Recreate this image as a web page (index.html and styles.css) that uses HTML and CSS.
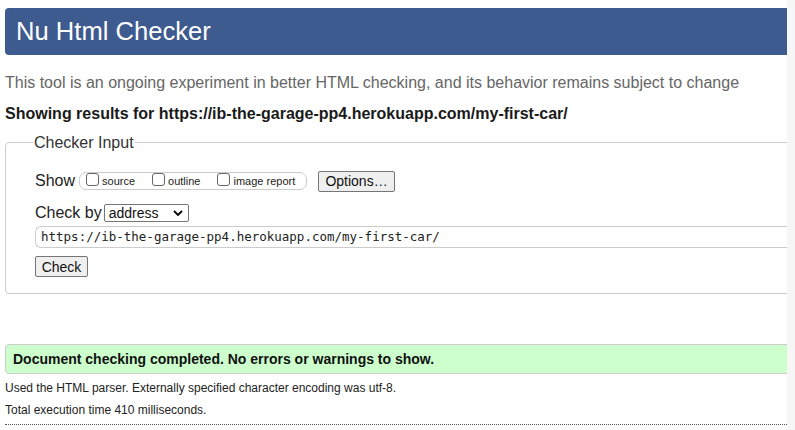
FILE: index.html
```html
<!DOCTYPE html>
<html>
<head>
<meta charset="utf-8">
<link rel="stylesheet" href="styles.css">
</head>
<body>
<div class="page">
  <div class="viewport">
    <div class="content">
      <h1 class="title">Nu Html Checker</h1>
      <p class="intro">This tool is an ongoing experiment in better HTML checking, and its behavior remains subject to change</p>
      <p class="showing">Showing results for https://ib-the-garage-pp4.herokuapp.com/my-first-car/</p>
      <fieldset class="checker">
        <legend class="legend">Checker Input</legend>
        <div class="row show-row">
          <span class="lbl">Show</span>
          <span class="opts">
            <label class="opt"><span class="cb"></span>source</label>
            <label class="opt"><span class="cb"></span>outline</label>
            <label class="opt"><span class="cb"></span>image report</label>
          </span>
          <span class="btn options-btn">Options…</span>
        </div>
        <div class="row by-row">
          <span class="lbl">Check by</span>
          <span class="select">address<svg class="chev" viewBox="0 0 10 6" width="10" height="6"><path d="M1 1 L5 5 L9 1" fill="none" stroke="#000" stroke-width="1.8"/></svg></span>
        </div>
        <div class="url">https://ib-the-garage-pp4.herokuapp.com/my-first-car/</div>
        <div class="row"><span class="btn check-btn">Check</span></div>
      </fieldset>
      <div class="success">Document checking completed. No errors or warnings to show.</div>
      <p class="details">Used the HTML parser. Externally specified character encoding was utf-8.</p>
      <p class="details">Total execution time 410 milliseconds.</p>
      <div class="dotted"></div>
    </div>
  </div>
  <div class="strip"></div>
</div>
</body>
</html>
```

FILE: styles.css
```css
* { box-sizing: border-box; }
html, body { margin: 0; padding: 0; background: #fff; }
body { font-family: "Liberation Sans", Arial, sans-serif; color: #222; }
.page { display: flex; width: 795px; height: 430px; overflow: hidden; }
.viewport { width: 787px; overflow: hidden; padding-left: 5px; flex: none; }
.strip { flex: 1; background: #f6f6f6; }
.content { width: 820px; padding-top: 8px; }
.title {
  margin: 0;
  height: 47px;
  background: #3d5b8f;
  color: #fff;
  font-weight: normal;
  font-size: 25.6px;
  line-height: 47px;
  padding-left: 11px;
  border-radius: 4px;
}
.intro { margin: 18px 0 0; font-size: 16px; line-height: 19px; color: #666; }
.showing { margin: 12px 0 0; font-size: 16px; line-height: 19px; font-weight: bold; color: #1a1a1a; }
.checker {
  margin: 10px 0 0;
  padding: 0 0 0 29px;
  border: 1px solid #ccc;
  border-radius: 4px;
  height: 161px;
}
.legend { font-size: 16px; color: #333; padding: 0 1px; margin-left: -2px; line-height: 19px; }
.row { display: flex; align-items: center; }
.lbl { font-size: 16px; color: #222; }
.show-row { margin-top: 18px; height: 22px; }
.opts {
  display: flex; align-items: center;
  margin-left: 4px;
  width: 228px; height: 18px;
  border: 1px solid #ccc; border-radius: 7px;
  padding-left: 6px;
}
.opt { display: flex; align-items: center; font-size: 11px; color: #222; margin-right: 17px; }
.opt:last-child { margin-right: 0; }
.cb { width: 13px; height: 13px; border: 1px solid #666; border-radius: 3px; margin-right: 3px; margin-top: -3px; background: #fff; }
.btn {
  display: inline-flex; align-items: center; justify-content: center;
  border: 1px solid #767676; border-radius: 2px; background: #efefef;
  font-size: 14px; color: #111; height: 21px;
}
.options-btn { margin-left: 11px; width: 77px; }
.by-row { margin-top: 11px; height: 20px; }
.select {
  display: inline-flex; align-items: center; justify-content: space-between;
  margin-left: 2px; width: 85px; height: 18px;
  border: 1px solid #767676; border-radius: 2px;
  font-size: 14px; color: #111; padding: 0 5px 0 4px;
}
.url {
  margin-top: 3px;
  height: 22px;
  border: 1px solid #ccc; border-right: none;
  border-radius: 6px 0 0 6px;
  font-family: "DejaVu Sans Mono", "Liberation Mono", monospace;
  font-size: 12.5px; line-height: 20px;
  padding-left: 5px; color: #222;
}
.check-btn { margin-top: 8px; width: 53px; }
.success {
  margin-top: 50px;
  height: 30px;
  background: #ccffcc;
  border: 1px solid #ccc;
  border-radius: 4px;
  font-size: 14px; font-weight: bold; line-height: 28px;
  padding-left: 7px; color: #111;
}
.details { margin: 7px 0 0; font-size: 12px; line-height: 14px; color: #222; }
.details + .details { margin-top: 8px; }
.dotted { margin-top: 7px; border-top: 1px dotted #555; }
```
